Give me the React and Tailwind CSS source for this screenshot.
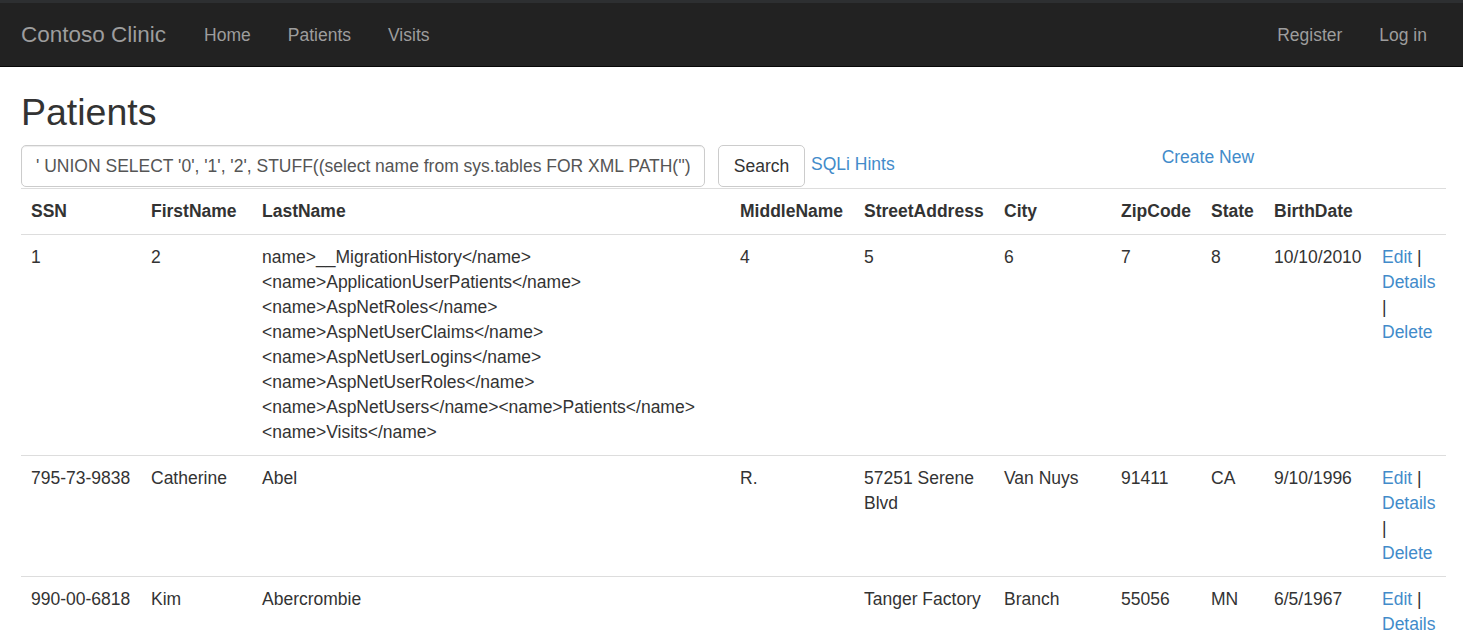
const patients = [
  {
    ssn: "1",
    first: "2",
    last: [
      "name>__MigrationHistory</name>",
      "<name>ApplicationUserPatients</name>",
      "<name>AspNetRoles</name>",
      "<name>AspNetUserClaims</name>",
      "<name>AspNetUserLogins</name>",
      "<name>AspNetUserRoles</name>",
      "<name>AspNetUsers</name><name>Patients</name>",
      "<name>Visits</name>",
    ],
    middle: "4",
    street: "5",
    city: "6",
    zip: "7",
    state: "8",
    birth: "10/10/2010",
  },
  {
    ssn: "795-73-9838",
    first: "Catherine",
    last: ["Abel"],
    middle: "R.",
    street: "57251 Serene Blvd",
    city: "Van Nuys",
    zip: "91411",
    state: "CA",
    birth: "9/10/1996",
  },
  {
    ssn: "990-00-6818",
    first: "Kim",
    last: ["Abercrombie"],
    middle: "",
    street: "Tanger Factory",
    city: "Branch",
    zip: "55056",
    state: "MN",
    birth: "6/5/1967",
  },
];

const headers = [
  ["SSN", "w-[120px]"],
  ["FirstName", "w-[111px]"],
  ["LastName", "w-[478px]"],
  ["MiddleName", "w-[124px]"],
  ["StreetAddress", "w-[140px]"],
  ["City", "w-[117px]"],
  ["ZipCode", "w-[90px]"],
  ["State", "w-[63px]"],
  ["BirthDate", "w-[108px]"],
  ["", "w-[74px]"],
];

const Navbar = () => (
  <nav className="h-[67px] bg-[#222] border-t-[3px] border-t-[#2d2f31] border-b border-b-[#080808] flex items-center pt-[2px] pl-[21px] pr-[36px] text-[#9d9d9d]">
    <a href="#" className="text-[22.5px] leading-none">Contoso Clinic</a>
    <ul className="flex items-center ml-[38px] gap-[37px] text-[17.5px]">
      <li><a href="#">Home</a></li>
      <li><a href="#">Patients</a></li>
      <li><a href="#">Visits</a></li>
    </ul>
    <ul className="flex items-center ml-auto gap-[37px] text-[17.5px]">
      <li><a href="#">Register</a></li>
      <li><a href="#">Log in</a></li>
    </ul>
  </nav>
);

const App = () => {
  return (
    <div className="min-h-screen bg-white text-[#333] text-[17.5px] leading-[25px]" style={{ fontFamily: '"Liberation Sans", Arial, sans-serif' }}>
      <Navbar />
      <div className="pl-[21px] pr-[17px]">
        <h2 className="mt-[25px] mb-[12px] text-[37.5px] leading-[41px] font-normal">Patients</h2>

        {/* Search row */}
        <div className="flex items-start h-[43px]">
          <input
            readOnly
            defaultValue="' UNION SELECT '0', '1', '2', STUFF((select name from sys.tables FOR XML PATH('')), 1, 1, ''), '4', '5', '6', '7', '8', '10/10/2010' --"
            className="w-[684px] h-[42px] px-[14px] border border-[#ccc] rounded-[5px] text-[#555] shadow-[inset_0_1px_1px_rgba(0,0,0,0.075)] outline-none"
          />
          <button className="ml-[13px] w-[87px] h-[42px] border border-[#ccc] rounded-[5px] bg-white text-[#333]">
            Search
          </button>
          <a href="#" className="ml-[6px] mt-[7px] text-[#428bca]">SQLi Hints</a>
          <a href="#" className="ml-[267px] mt-0 text-[#428bca]">Create New</a>
        </div>

        <table className="w-[1425px] table-fixed border-t border-[#ddd] border-collapse">
          <thead>
            <tr className="border-b border-[#ddd]">
              {headers.map(([label, w], i) => (
                <th key={i} className={`${w} p-[10px] text-left font-bold align-bottom`}>{label}</th>
              ))}
            </tr>
          </thead>
          <tbody>
            {patients.map((p) => (
              <tr key={p.ssn} className="border-b border-[#ddd] align-top">
                <td className="p-[10px]">{p.ssn}</td>
                <td className="p-[10px]">{p.first}</td>
                <td className="p-[10px]">
                  {p.last.map((line, i) => (
                    <div key={i}>{line}</div>
                  ))}
                </td>
                <td className="p-[10px]">{p.middle}</td>
                <td className="p-[10px]">{p.street}</td>
                <td className="p-[10px]">{p.city}</td>
                <td className="p-[10px]">{p.zip}</td>
                <td className="p-[10px]">{p.state}</td>
                <td className="p-[10px]">{p.birth}</td>
                <td className="p-[10px]">
                  <a href="#" className="text-[#428bca]">Edit</a> |{" "}
                  <a href="#" className="text-[#428bca]">Details</a> |{" "}
                  <a href="#" className="text-[#428bca]">Delete</a>
                </td>
              </tr>
            ))}
          </tbody>
        </table>
      </div>
    </div>
  );
};

export default App;
